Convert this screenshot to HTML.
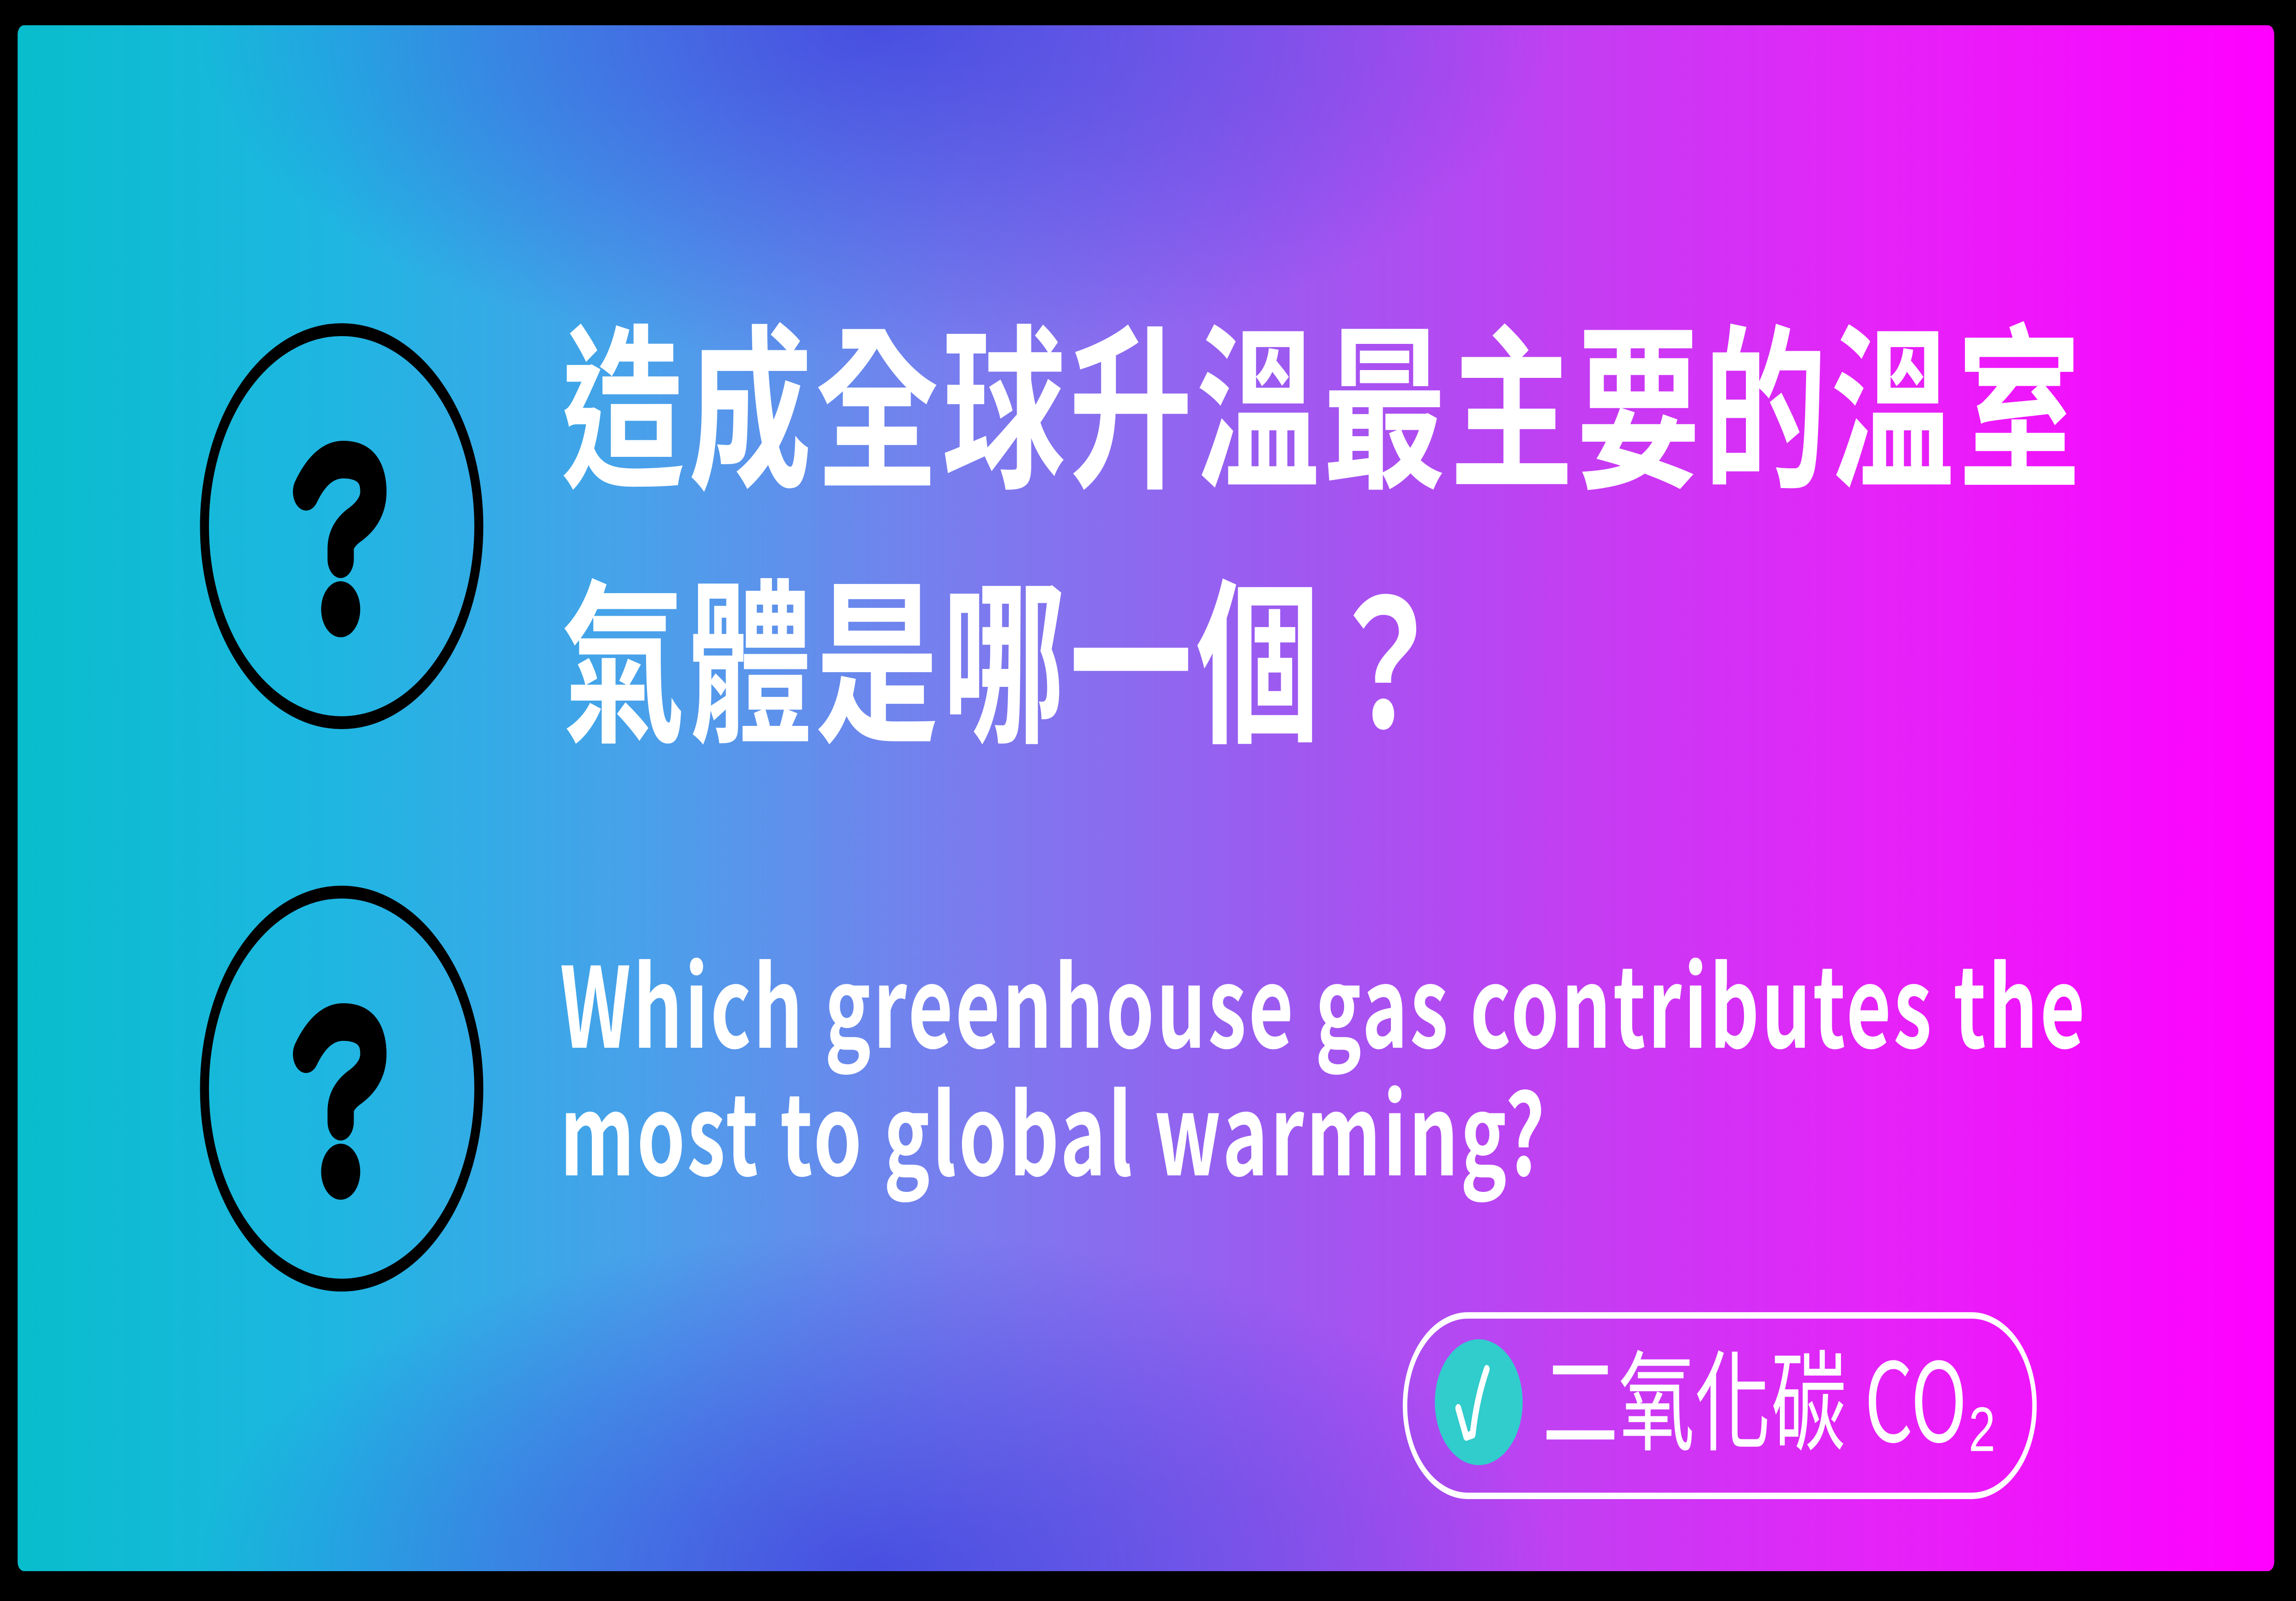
<!DOCTYPE html>
<html><head><meta charset="utf-8"><style>
html,body{margin:0;padding:0;width:100%;height:100%;overflow:hidden;background:#000}
svg{display:block;width:100vw;height:100vh}
text{font-family:"Noto Sans CJK TC","Liberation Sans",sans-serif;fill:#fff}
</style></head><body>
<svg viewBox="0 0 7164 3487" preserveAspectRatio="none" xmlns="http://www.w3.org/2000/svg">
<defs>
<linearGradient id="lg" x1="0" y1="0" x2="1" y2="0">
<stop offset="0" stop-color="#08bdcc"/>
<stop offset="0.14" stop-color="#1fb6e2"/>
<stop offset="0.28" stop-color="#4aa0ea"/>
<stop offset="0.42" stop-color="#7a7cee"/>
<stop offset="0.55" stop-color="#9a5cf0"/>
<stop offset="0.68" stop-color="#c040f2"/>
<stop offset="0.82" stop-color="#e424f8"/>
<stop offset="1" stop-color="#ff00ff"/>
</linearGradient>
<radialGradient id="rt" cx="0.38" cy="0" r="0.5" gradientTransform="translate(0.38 0) scale(0.6 0.44) translate(-0.38 0)">
<stop offset="0" stop-color="#3c3cdc" stop-opacity="0.75"/>
<stop offset="1" stop-color="#3c3cdc" stop-opacity="0"/>
</radialGradient>
<radialGradient id="rb" cx="0.38" cy="1" r="0.5" gradientTransform="translate(0.38 1) scale(0.6 0.44) translate(-0.38 -1)">
<stop offset="0" stop-color="#3c3cdc" stop-opacity="0.75"/>
<stop offset="1" stop-color="#3c3cdc" stop-opacity="0"/>
</radialGradient>
</defs>
<rect x="0" y="0" width="7164" height="3487" fill="#000"/>
<rect x="55" y="55" width="7041" height="3367" rx="20" fill="url(#lg)"/>
<rect x="55" y="55" width="7041" height="3367" rx="20" fill="url(#rt)"/>
<rect x="55" y="55" width="7041" height="3367" rx="20" fill="url(#rb)"/>

<circle cx="1066" cy="1146" r="428" fill="none" stroke="#000" stroke-width="28"/>
<circle cx="1066" cy="2371" r="428" fill="none" stroke="#000" stroke-width="28"/>
<g transform="translate(913,963)">
<path d="M42 108 Q90 38 158 38 Q252 38 252 108 Q252 152 190 182 Q150 204 150 232 L150 255" fill="none" stroke="#000" stroke-width="82" stroke-linecap="round" stroke-linejoin="round"/>
<circle cx="150" cy="364" r="61" fill="#000"/>
</g>
<g transform="translate(913,2188)">
<path d="M42 108 Q90 38 158 38 Q252 38 252 108 Q252 152 190 182 Q150 204 150 232 L150 255" fill="none" stroke="#000" stroke-width="82" stroke-linecap="round" stroke-linejoin="round"/>
<circle cx="150" cy="364" r="61" fill="#000"/>
</g>

<text x="1752" y="1032" font-size="385" font-weight="700" letter-spacing="11">造成全球升溫最主要的溫室</text>
<text x="1752" y="1586" font-size="385" font-weight="700" letter-spacing="11">氣體是哪一個？</text>

<text x="1747" y="2282" font-size="242" font-weight="700" letter-spacing="6.5">Which greenhouse gas contributes the</text>
<text x="1747" y="2560" font-size="242" font-weight="700" letter-spacing="6.5">most to global warming?</text>

<rect x="4384" y="2865" width="1964" height="393" rx="196" fill="none" stroke="#fff" stroke-width="14"/>
<circle cx="4614" cy="3054" r="137" fill="#31cccc"/>
<path d="M4550 3067 L4575 3129 L4595 3124 Q4607 3047 4639 2982" fill="none" stroke="#fff" stroke-width="18" stroke-linecap="round" stroke-linejoin="round"/>
<text x="4812" y="3140" font-size="238" font-weight="400">二氧化碳 CO₂</text>
</svg>
</body></html>
